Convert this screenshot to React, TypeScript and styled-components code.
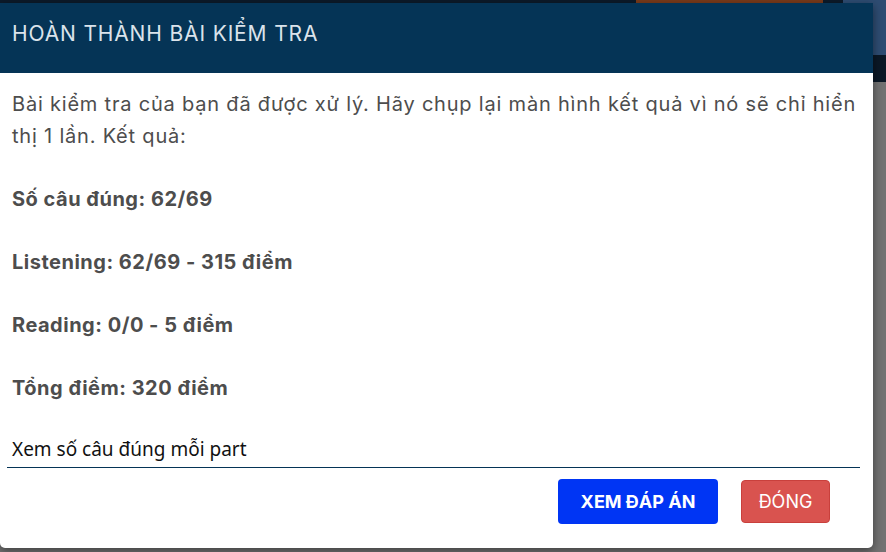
import React from "react";
import styled, { createGlobalStyle } from "styled-components";

const Global = createGlobalStyle`
  html, body { margin: 0; padding: 0; }
  body {
    width: 886px;
    height: 552px;
    overflow: hidden;
    background: #6f6f6f;
    font-family: Inter, "Noto Sans", sans-serif;
  }
`;

const Page = styled.div`
  position: relative;
  width: 886px;
  height: 552px;
  display: grid;
  grid-template-rows: 55px 27px 1fr;
`;

const NavBar = styled.div`
  display: flex;
  background: #0c1a2a;
`;

const NavFill = styled.div`
  flex: 1;
`;

const NavAction = styled.div`
  width: 187px;
  height: 3px;
  background: #7a3a1a;
`;

const NavGap = styled.div`
  width: 20px;
`;

const NavSide = styled.div`
  width: 43px;
  background: #2e4c72;
`;

const SubBar = styled.div`
  background: #0b1826;
`;

const Content = styled.div`
  background: #727272;
`;

const Modal = styled.div`
  position: absolute;
  left: 0;
  top: 3px;
  width: 873px;
  height: 545px;
  background: #ffffff;
  border-radius: 0 0 5px 5px;
  box-shadow: 0 3px 10px rgba(0, 0, 0, 0.45);
  display: flex;
  flex-direction: column;
  overflow: hidden;
`;

const Header = styled.div`
  height: 70px;
  background: #053456;
  display: flex;
  align-items: center;
  padding: 0 12px 10px;
  box-sizing: border-box;
`;

const Title = styled.h2`
  margin: 0;
  font-size: 21px;
  font-weight: 400;
  color: #dbe3eb;
  letter-spacing: 0.85px;
`;

const Body = styled.div`
  padding: 15px 12px 0;
  color: #4d4d4d;
  font-size: 20px;
  line-height: 32px;
  letter-spacing: 0.5px;
`;

const Intro = styled.p`
  margin: 0 0 31px;
  letter-spacing: 0.8px;
`;

const Stat = styled.p`
  margin: 0 0 31px;
  font-weight: 700;
`;

const PartLink = styled.div`
  margin: 0 13px 0 7px;
  padding: 2px 5px 6px;
  border-bottom: 1px solid #053456;
  font-family: "Noto Sans", sans-serif;
  font-size: 19px;
  line-height: 24px;
  color: #111;
`;

const Footer = styled.div`
  display: flex;
  justify-content: flex-end;
  align-items: center;
  gap: 23px;
  padding: 11px 43px 0 0;
`;

const Button = styled.button<{ $variant: "primary" | "danger" }>`
  border: none;
  border-radius: 4px;
  color: #fff;
  font-family: Inter, "Noto Sans", sans-serif;
  font-size: 18px;
  cursor: pointer;
  ${(p) =>
    p.$variant === "primary"
      ? `background: #0035f4; width: 160px; height: 45px; font-weight: 700;`
      : `background: #d9534f; width: 89px; height: 43px; font-weight: 400; border: 1px solid #c9403c;`}
`;

export default function App() {
  return (
    <>
      <Global />
      <Page>
        <NavBar>
          <NavFill />
          <NavAction />
          <NavGap />
          <NavSide />
        </NavBar>
        <SubBar />
        <Content />
        <Modal>
          <Header>
            <Title>HOÀN THÀNH BÀI KIỂM TRA</Title>
          </Header>
          <Body>
            <Intro>
              Bài kiểm tra của bạn đã được xử lý. Hãy chụp lại màn hình kết quả vì nó sẽ chỉ hiển
              thị 1 lần. Kết quả:
            </Intro>
            <Stat>Số câu đúng: 62/69</Stat>
            <Stat>Listening: 62/69 - 315 điểm</Stat>
            <Stat>Reading: 0/0 - 5 điểm</Stat>
            <Stat>Tổng điểm: 320 điểm</Stat>
          </Body>
          <PartLink>Xem số câu đúng mỗi part</PartLink>
          <Footer>
            <Button $variant="primary">XEM ĐÁP ÁN</Button>
            <Button $variant="danger">ĐÓNG</Button>
          </Footer>
        </Modal>
      </Page>
    </>
  );
}
